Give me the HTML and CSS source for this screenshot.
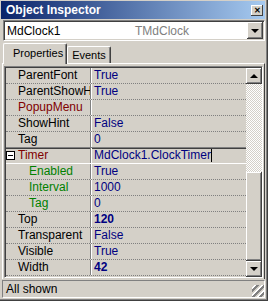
FILE: index.html
```html
<!DOCTYPE html>
<html lang="en">

<head>
    <meta charset="UTF-8">
    <title>Object Inspector</title>
    <link rel="stylesheet" href="styles.css">
</head>

<body>
    <div class="window">
        <div class="titlebar">
            <span class="title">Object Inspector</span>
            <span class="close">&#x2715;</span>
        </div>

        <!-- Component selector -->
        <div class="combo">
            <span class="combo-name">MdClock1</span>
            <span class="combo-type">TMdClock</span>
            <span class="combo-btn"><span class="arrow-down"></span></span>
        </div>

        <div class="tabs">
            <span class="tab tab-active">Properties</span>
            <span class="tab">Events</span>
        </div>

        <div class="page">
            <div class="grid">
                <div class="rows">
                    <div class="row"><span class="name">ParentFont</span><span class="value">True</span></div>
                    <div class="row"><span class="name">ParentShowHint</span><span class="value">True</span></div>
                    <div class="row"><span class="name ref">PopupMenu</span><span class="value"></span></div>
                    <div class="row"><span class="name">ShowHint</span><span class="value">False</span></div>
                    <div class="row"><span class="name">Tag</span><span class="value">0</span></div>
                    <div class="row row-selected">
                        <span class="name ref expand"><span class="minus"></span>Timer</span>
                        <span class="value">MdClock1.ClockTimer<span class="caret"></span></span>
                    </div>
                    <div class="row"><span class="name sub">Enabled</span><span class="value">True</span></div>
                    <div class="row"><span class="name sub">Interval</span><span class="value">1000</span></div>
                    <div class="row"><span class="name sub">Tag</span><span class="value">0</span></div>
                    <div class="row"><span class="name">Top</span><span class="value bold">120</span></div>
                    <div class="row"><span class="name">Transparent</span><span class="value">False</span></div>
                    <div class="row"><span class="name">Visible</span><span class="value">True</span></div>
                    <div class="row"><span class="name">Width</span><span class="value bold">42</span></div>
                </div>
                <div class="scrollbar">
                    <span class="sb-btn"><span class="arrow-up"></span></span>
                    <span class="sb-track"></span>
                    <span class="sb-thumb"></span>
                    <span class="sb-btn"><span class="arrow-down"></span></span>
                </div>
            </div>
        </div>

        <div class="status">
            <span class="status-text">All shown</span>
            <span class="grip"></span>
        </div>
    </div>
</body>

</html>
```

FILE: styles.css
```css
body {
    margin: 0;
    background: #d4d0c8;
    font-family: "Liberation Sans", Arial, sans-serif;
    font-size: 12px;
}

.window {
    width: 268px;
    height: 301px;
    box-sizing: border-box;
    padding-top: 1px;
    border-right: 1px solid #404040;
    border-bottom: 1px solid #404040;
    box-shadow: inset -1px -1px #808080;
    background: #d4d0c8;
}

/* Title bar */
.titlebar {
    height: 18px;
    margin: 0 2px 0 1px;
    display: flex;
    align-items: center;
    justify-content: space-between;
    background: linear-gradient(to right, #0a246a, #a6caf0);
}

.title {
    color: #fff;
    font-weight: bold;
    font-size: 12px;
    padding-left: 5px;
}

.close {
    width: 12px;
    height: 11px;
    margin-right: 2px;
    background: #d4d0c8;
    box-shadow: inset -1px -1px #404040, inset 1px 1px #fff;
    font-size: 8px;
    line-height: 11px;
    text-align: center;
    color: #000;
    font-weight: bold;
}

/* Combo box */
.combo {
    height: 21px;
    margin: 1px 2px 0 3px;
    box-sizing: border-box;
    display: flex;
    align-items: center;
    background: #fff;
    border-top: 1px solid #808080;
    border-left: 1px solid #808080;
    border-bottom: 1px solid #fff;
    border-right: 1px solid #fff;
    box-shadow: inset 1px 1px #404040, inset -1px -1px #d4d0c8;
}

.combo-name {
    width: 128px;
    padding-left: 3px;
}

.combo-type {
    flex: 1;
    color: #808080;
}

.combo-btn {
    width: 16px;
    height: 17px;
    margin-right: 1px;
    display: flex;
    align-items: center;
    justify-content: center;
    background: #d4d0c8;
    box-shadow: inset -1px -1px #404040, inset 1px 1px #fff, inset -2px -2px #808080;
}

.arrow-down,
.arrow-up {
    width: 0;
    height: 0;
    border-left: 4px solid transparent;
    border-right: 4px solid transparent;
}

.arrow-down {
    border-top: 4px solid #000;
}

.arrow-up {
    border-bottom: 4px solid #000;
}

/* Tabs */
.tabs {
    height: 20px;
    margin-top: 2px;
    padding-left: 3px;
    display: flex;
    align-items: flex-end;
}

.tab {
    height: 16px;
    padding: 0 4px 0 4px;
    line-height: 16px;
    font-size: 11px;
    border-top: 1px solid #fff;
    border-left: 1px solid #fff;
    border-right: 1px solid #404040;
    border-radius: 2px 2px 0 0;
    box-shadow: inset -1px 0 #808080;
}

.tab-active {
    height: 20px;
    line-height: 19px;
    padding: 0 3px 0 9px;
    margin-bottom: -1px;
    position: relative;
    background: #d4d0c8;
}

/* Tab page */
.page {
    height: 216px;
    margin: 0 2px 0 2px;
    box-sizing: border-box;
    padding: 2px 1px 0 1px;
    border-top: 1px solid #fff;
    border-left: 1px solid #fff;
    border-right: 1px solid #404040;
}

.grid {
    height: 212px;
    box-sizing: border-box;
    display: flex;
    border-top: 1px solid #808080;
    border-left: 1px solid #808080;
    border-bottom: 1px solid #fff;
    border-right: 1px solid #fff;
    box-shadow: inset 1px 1px #404040;
    padding: 1px 0 0 1px;
}

.rows {
    flex: 1;
}

.row {
    height: 16px;
    box-sizing: border-box;
    display: grid;
    grid-template-columns: 85px 1fr;
    border-bottom: 1px dotted #808080;
    line-height: 15px;
    white-space: nowrap;
}

.name {
    padding-left: 12px;
    overflow: hidden;
    border-right: 1px solid #808080;
    color: #000;
}

.value {
    padding-left: 2px;
    border-left: 1px solid #fff;
    color: #000080;
    overflow: hidden;
}

.bold {
    font-weight: bold;
}

.ref {
    color: #800000;
}

.sub {
    padding-left: 23px;
    color: #008000;
}

.row-selected {
    border-bottom: 1px solid #fff;
    box-shadow: 0 -1px #808080, inset 0 1px #404040;
}

.expand {
    display: flex;
    align-items: center;
    padding-left: 0;
}

.minus {
    width: 7px;
    height: 7px;
    margin-right: 3px;
    border: 1px solid #000;
    background: #fff linear-gradient(#000, #000) no-repeat center / 5px 1px;
}

.caret {
    display: inline-block;
    width: 1px;
    height: 13px;
    vertical-align: -3px;
    background: #000;
}

/* Scrollbar */
.scrollbar {
    width: 16px;
    display: flex;
    flex-direction: column;
}

.sb-btn {
    height: 16px;
    display: flex;
    align-items: center;
    justify-content: center;
    background: #d4d0c8;
    box-shadow: inset -1px -1px #404040, inset 1px 1px #fff, inset -2px -2px #808080;
}

.sb-track {
    height: 88px;
    background: conic-gradient(#fff 25%, #d4d0c8 0 50%, #fff 0 75%, #d4d0c8 0) 0 0 / 2px 2px;
}

.sb-thumb {
    flex: 1;
    background: #d4d0c8;
    box-shadow: inset -1px -1px #404040, inset 1px 1px #fff, inset -2px -2px #808080;
}

/* Status bar */
.status {
    height: 18px;
    margin: 1px 2px 0 2px;
    box-sizing: border-box;
    display: flex;
    align-items: center;
    justify-content: space-between;
    border-top: 1px solid #808080;
    border-left: 1px solid #808080;
    border-bottom: 1px solid #fff;
    border-right: 1px solid #fff;
}

.status-text {
    padding-left: 3px;
}

.grip {
    width: 12px;
    height: 12px;
    align-self: flex-end;
    background: repeating-linear-gradient(135deg, transparent 0 2px, #fff 2px 3px, #808080 3px 5px);
}
```
